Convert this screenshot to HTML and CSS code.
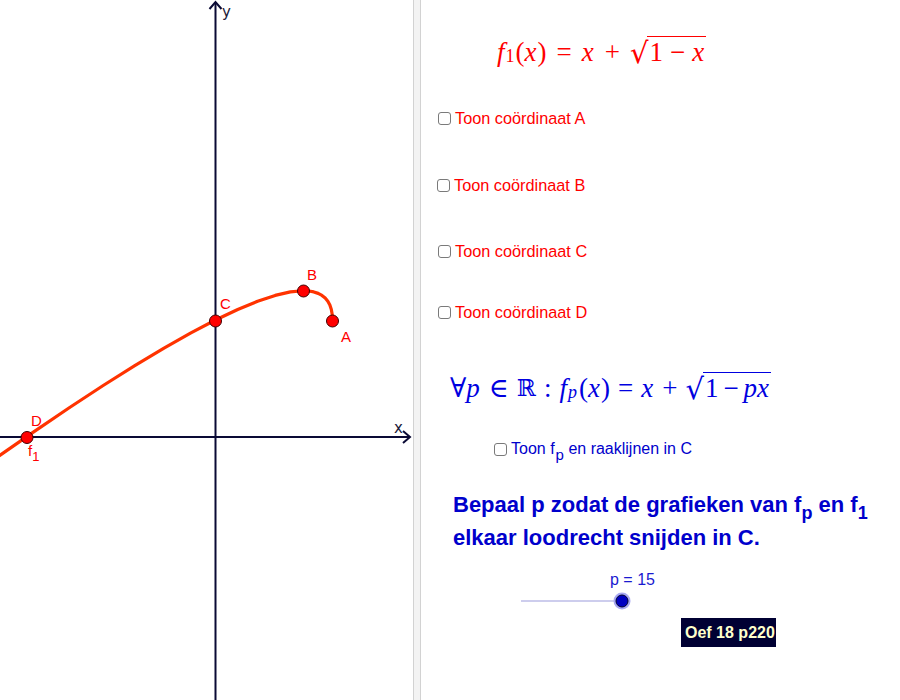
FILE: index.html
```html
<!DOCTYPE html>
<html>
<head>
<meta charset="utf-8">
<link rel="stylesheet" href="styles.css">
</head>
<body>
<div class="app">
  <div class="graphics">
    <svg class="plot" width="413" height="700" viewBox="0 0 413 700">
      <g class="axes">
        <line x1="0" y1="437" x2="410" y2="437"/>
        <polyline points="403,431 410,437 403,443" fill="none"/>
        <line x1="215.5" y1="2" x2="215.5" y2="700"/>
        <polyline points="209.5,9 215.5,2 221.5,9" fill="none"/>
      </g>
      <text class="axlabel" x="222" y="17">y</text>
      <text class="axlabel" x="394" y="433">x</text>
      <polyline class="curve" points="332.5,320 332.21,314.44 331.33,309.47 329.87,305.08 327.82,301.28 325.19,298.06 321.97,295.43 318.17,293.38 313.78,291.92 308.81,291.04 303.25,290.75 290.38,291.92 275.17,295.43 257.62,301.28 237.73,309.47 215.5,320 190.93,332.87 164.02,348.08 134.77,365.63 103.18,385.52 69.25,407.75 32.98,432.32 -5.63,459.23"/>
      <g class="pts">
        <circle cx="332.5" cy="321" r="6"/>
        <circle cx="303.5" cy="291" r="6"/>
        <circle cx="215.5" cy="321" r="6"/>
        <circle cx="27" cy="437.5" r="6"/>
      </g>
      <text class="plabel" x="341" y="342">A</text>
      <text class="plabel" x="307" y="280">B</text>
      <text class="plabel" x="220" y="309">C</text>
      <text class="plabel" x="31" y="426">D</text>
      <text class="plabel" x="28" y="456">f<tspan class="sub" dy="5">1</tspan></text>
    </svg>
  </div>
  <div class="divider"></div>
  <div class="panel">
    <div class="formula red f1">
      <i>f</i><span class="msub">1</span>(<i>x</i>)<span class="op">=</span><i>x</i><span class="op">+</span><span class="sqrt"><span class="rad">√</span><span class="under">1<span class="op sm">−</span><i>x</i></span></span>
    </div>
    <label class="cb red rowA"><span class="box"></span><span>Toon coördinaat A</span></label>
    <label class="cb red rowB"><span class="box"></span><span>Toon coördinaat B</span></label>
    <label class="cb red rowC"><span class="box"></span><span>Toon coördinaat C</span></label>
    <label class="cb red rowD"><span class="box"></span><span>Toon coördinaat D</span></label>
    <div class="formula blue f2">
      ∀<i>p</i><span class="op">∈</span><span class="bb">ℝ</span><span class="op">:</span><i>f</i><span class="msub"><i>p</i></span>(<i>x</i>)<span class="op">=</span><i>x</i><span class="op">+</span><span class="sqrt"><span class="rad">√</span><span class="under">1<span class="op sm">−</span><i>px</i></span></span>
    </div>
    <label class="cb blue rowFp"><span class="box"></span><span>Toon f<sub class="tsub">p</sub> en raaklijnen in C</span></label>
    <p class="task">Bepaal p zodat de grafieken van f<sub class="bsub">p</sub> en f<sub class="bsub">1</sub><br>elkaar loodrecht snijden in C.</p>
    <div class="slabel">p = 15</div>
    <div class="slider">
      <svg width="120" height="20" viewBox="0 0 120 20">
        <line x1="0" y1="10" x2="101" y2="10" class="track"/>
        <circle cx="101" cy="10" r="8.5" class="halo"/>
        <circle cx="101" cy="10" r="6" class="knob"/>
      </svg>
    </div>
    <div class="oef">Oef 18 p220</div>
  </div>
</div>
</body>
</html>
```

FILE: styles.css
```css
html, body {
  margin: 0;
  padding: 0;
  background: #ffffff;
}
.app {
  display: flex;
  width: 900px;
  height: 700px;
  overflow: hidden;
  font-family: "Liberation Sans", Arial, sans-serif;
}
.graphics {
  width: 413px;
  height: 700px;
  flex: none;
}
.plot {
  display: block;
}
.axes line, .axes polyline {
  stroke: #0a0a35;
  stroke-width: 2;
}
.axlabel {
  font-family: "DejaVu Sans", sans-serif;
  font-size: 15px;
  fill: #1a1a3a;
}
.curve {
  fill: none;
  stroke: #ff3300;
  stroke-width: 3.2;
  stroke-linejoin: round;
  stroke-linecap: round;
}
.pts circle {
  fill: #ff0000;
  stroke: #400000;
  stroke-width: 1;
}
.plabel {
  font-family: "Liberation Sans", Arial, sans-serif;
  font-size: 15px;
  fill: #ff0000;
}
.plabel .sub {
  font-size: 13px;
}
.divider {
  width: 6px;
  flex: none;
  height: 700px;
  background: #f3f3f3;
  border-left: 1px solid #d2d2d2;
  border-right: 1px solid #d2d2d2;
}
.panel {
  flex: 1;
  display: flex;
  flex-direction: column;
  align-items: flex-start;
  padding-top: 32px;
}
.red { color: #ff0000; }
.blue { color: #0000cc; }

.formula {
  font-family: "Liberation Serif", "DejaVu Serif", serif;
  font-size: 27px;
  height: 40px;
  display: flex;
  align-items: center;
  white-space: nowrap;
}
.formula i {
  font-style: italic;
  margin-right: 1px;
}
.f1 {
  margin-left: 76px;
}
.f1 .op {
  margin: 0 10px;
}
.f1 .op.sm {
  margin: 0 7px;
}
.f2 {
  margin-left: 29px;
  margin-top: 46px;
  color: #0000e0;
}
.msub {
  font-size: 18px;
  align-self: flex-end;
  margin-bottom: 5px;
  margin-right: 1px;
}
.op {
  margin: 0 8px;
}
.op.sm {
  margin: 0 5px;
}
.bb {
  font-family: "DejaVu Serif", serif;
  font-size: 23px;
}
.sqrt {
  display: inline-flex;
  align-items: flex-end;
}
.rad {
  font-family: "DejaVu Serif", serif;
  font-size: 29px;
  line-height: 1;
  margin-right: -1px;
}
.under {
  border-top: 1.5px solid currentColor;
  padding: 0 1px 0 2px;
  line-height: 31px;
  display: inline-flex;
}
.cb {
  display: flex;
  align-items: center;
  height: 20px;
  font-size: 16.3px;
  margin-left: 17px;
  white-space: nowrap;
}
.box {
  width: 11px;
  height: 11px;
  border: 1.5px solid #7a7a7a;
  border-radius: 3px;
  margin-right: 4px;
  background: #fff;
  flex: none;
}
.rowA { margin-top: 36px; }
.rowB { margin-top: 47px; margin-left: 16px; }
.rowC { margin-top: 46px; }
.rowD { margin-top: 41px; }
.rowFp {
  margin-top: 29px;
  margin-left: 73px;
  height: 24px;
  font-size: 16px;
}
.tsub {
  font-size: 15px;
  vertical-align: -6px;
  line-height: 0;
  margin-left: 1px;
}
.task {
  margin: 27px 0 0 32px;
  font-size: 22px;
  font-weight: bold;
  line-height: 33px;
  color: #0000cc;
  white-space: nowrap;
}
.bsub {
  font-size: 18px;
  vertical-align: -7px;
  line-height: 0;
}
.slabel {
  margin: 17px 0 0 189px;
  height: 18px;
  line-height: 18px;
  font-size: 16px;
  color: #1a1ad0;
}
.slider {
  margin: 2px 0 0 100px;
  height: 20px;
}
.slider svg {
  display: block;
}
.track {
  stroke: #9c9cdc;
  stroke-width: 1.2;
}
.halo {
  fill: #a8a8f0;
}
.knob {
  fill: #0000c0;
  stroke: #000030;
  stroke-width: 1;
}
.oef {
  margin: 7px 0 0 260px;
  background: #000033;
  color: #ffffcc;
  font-weight: bold;
  font-size: 16px;
  height: 29px;
  line-height: 29px;
  padding: 0 4px;
  width: 87px;
  box-sizing: content-box;
  white-space: nowrap;
}
```
